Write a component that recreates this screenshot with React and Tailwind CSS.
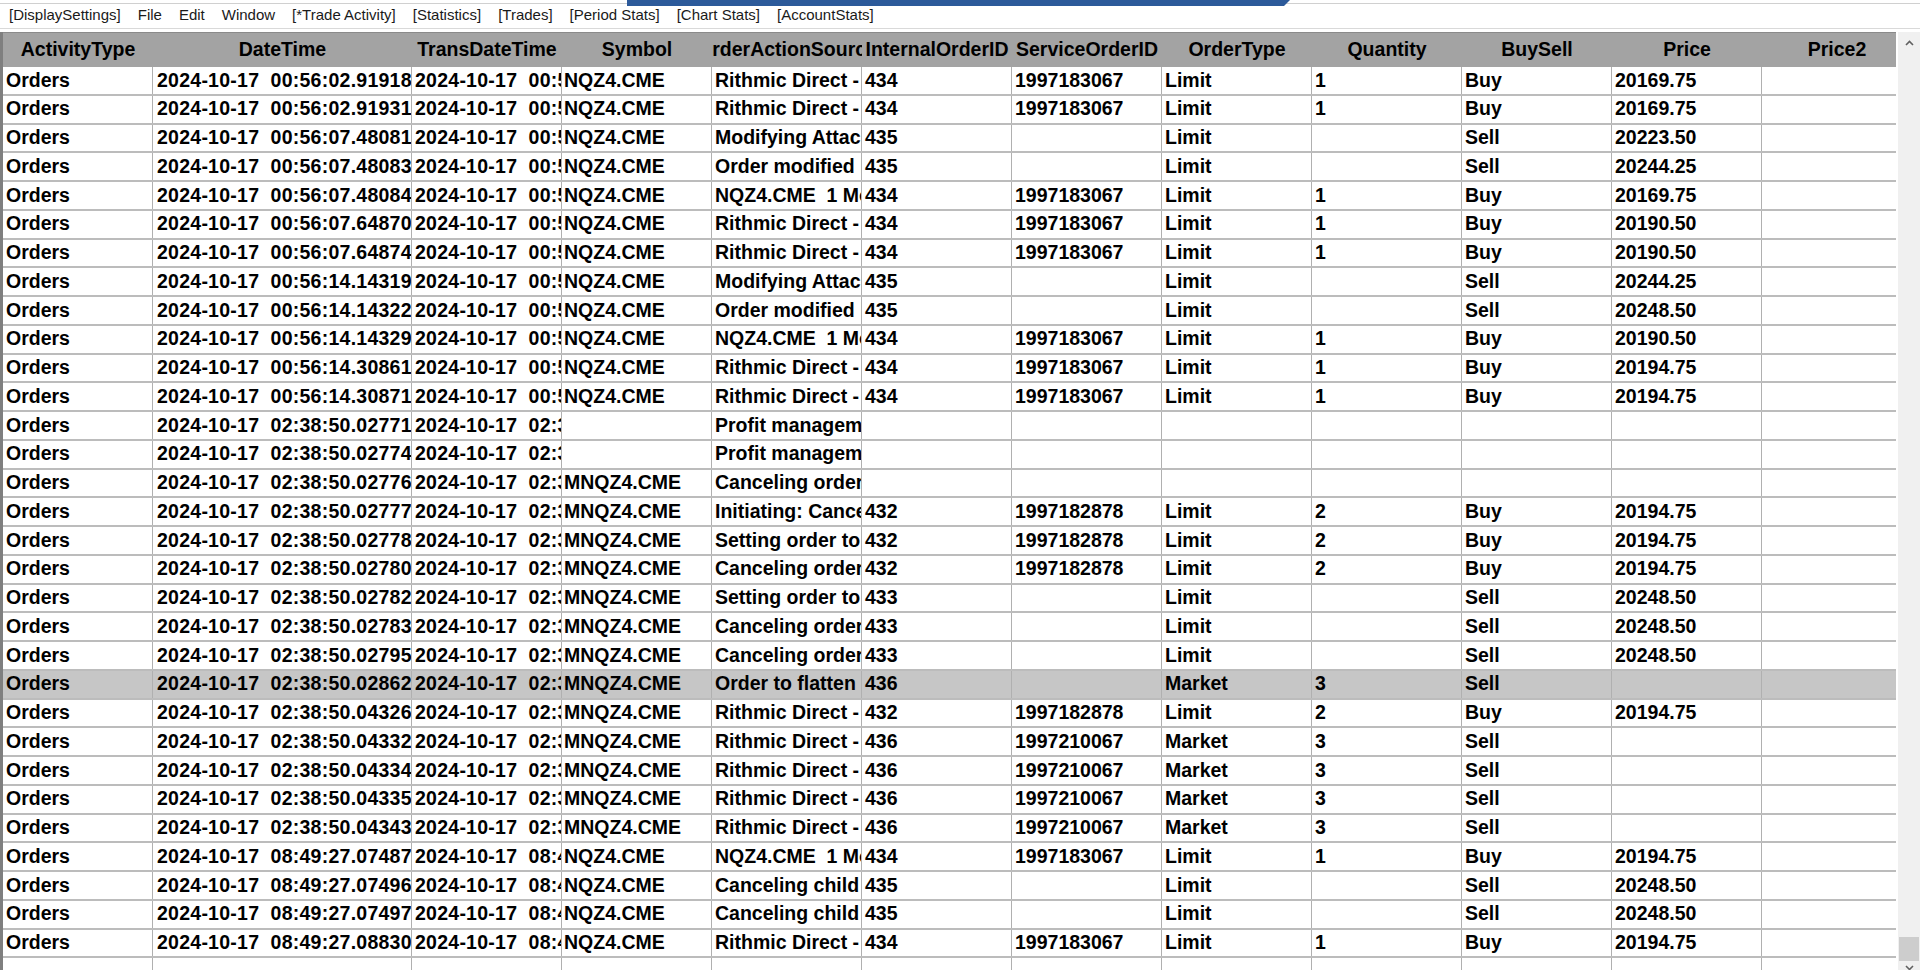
import React from 'react';

const HEAD = ['ActivityType','DateTime','TransDateTime','Symbol','OrderActionSource','InternalOrderID','ServiceOrderID','OrderType','Quantity','BuySell','Price','Price2'];

const MENU = ['[DisplaySettings]','File','Edit','Window','[*Trade Activity]','[Statistics]','[Trades]','[Period Stats]','[Chart Stats]','[AccountStats]'];

const RD = 'Rithmic Direct - Order status update';
const r = (dt, sym, src, iid, sid, type, qty, bs, price) => [
  'Orders', '2024-10-17  ' + dt, '2024-10-17  ' + dt, sym, src, iid, sid, type, qty, bs, price, ''
];

const ROWS = [
  r('00:56:02.91918','NQZ4.CME',RD,'434','1997183067','Limit','1','Buy','20169.75'),
  r('00:56:02.91931','NQZ4.CME',RD,'434','1997183067','Limit','1','Buy','20169.75'),
  r('00:56:07.48081','NQZ4.CME','Modifying Attached Order','435','','Limit','','Sell','20223.50'),
  r('00:56:07.48083','NQZ4.CME','Order modified by user','435','','Limit','','Sell','20244.25'),
  r('00:56:07.48084','NQZ4.CME','NQZ4.CME  1 Modify','434','1997183067','Limit','1','Buy','20169.75'),
  r('00:56:07.64870','NQZ4.CME',RD,'434','1997183067','Limit','1','Buy','20190.50'),
  r('00:56:07.64874','NQZ4.CME',RD,'434','1997183067','Limit','1','Buy','20190.50'),
  r('00:56:14.14319','NQZ4.CME','Modifying Attached Order','435','','Limit','','Sell','20244.25'),
  r('00:56:14.14322','NQZ4.CME','Order modified by user','435','','Limit','','Sell','20248.50'),
  r('00:56:14.14329','NQZ4.CME','NQZ4.CME  1 Modify','434','1997183067','Limit','1','Buy','20190.50'),
  r('00:56:14.30861','NQZ4.CME',RD,'434','1997183067','Limit','1','Buy','20194.75'),
  r('00:56:14.30871','NQZ4.CME',RD,'434','1997183067','Limit','1','Buy','20194.75'),
  r('02:38:50.02771','','Profit management','','','','','',''),
  r('02:38:50.02774','','Profit management','','','','','',''),
  r('02:38:50.02776','MNQZ4.CME','Canceling orders','','','','','',''),
  r('02:38:50.02777','MNQZ4.CME','Initiating: Cancel','432','1997182878','Limit','2','Buy','20194.75'),
  r('02:38:50.02778','MNQZ4.CME','Setting order to cancel','432','1997182878','Limit','2','Buy','20194.75'),
  r('02:38:50.02780','MNQZ4.CME','Canceling order','432','1997182878','Limit','2','Buy','20194.75'),
  r('02:38:50.02782','MNQZ4.CME','Setting order to cancel','433','','Limit','','Sell','20248.50'),
  r('02:38:50.02783','MNQZ4.CME','Canceling order','433','','Limit','','Sell','20248.50'),
  r('02:38:50.02795','MNQZ4.CME','Canceling order','433','','Limit','','Sell','20248.50'),
  r('02:38:50.02862','MNQZ4.CME','Order to flatten position','436','','Market','3','Sell',''),
  r('02:38:50.04326','MNQZ4.CME',RD,'432','1997182878','Limit','2','Buy','20194.75'),
  r('02:38:50.04332','MNQZ4.CME',RD,'436','1997210067','Market','3','Sell',''),
  r('02:38:50.04334','MNQZ4.CME',RD,'436','1997210067','Market','3','Sell',''),
  r('02:38:50.04335','MNQZ4.CME',RD,'436','1997210067','Market','3','Sell',''),
  r('02:38:50.04343','MNQZ4.CME',RD,'436','1997210067','Market','3','Sell',''),
  r('08:49:27.07487','NQZ4.CME','NQZ4.CME  1 Modify','434','1997183067','Limit','1','Buy','20194.75'),
  r('08:49:27.07496','NQZ4.CME','Canceling child order','435','','Limit','','Sell','20248.50'),
  r('08:49:27.07497','NQZ4.CME','Canceling child order','435','','Limit','','Sell','20248.50'),
  r('08:49:27.08830','NQZ4.CME',RD,'434','1997183067','Limit','1','Buy','20194.75'),
  ['','','','','','','','','','','',''],
];

const SELECTED = 21;

function Chevron({ down }) {
  return (
    <svg width="9" height="6" viewBox="0 0 9 6" className="block">
      <polyline
        points={down ? '1,1 4.5,4.5 8,1' : '1,5 4.5,1.5 8,5'}
        fill="none"
        stroke="#606060"
        strokeWidth="1.6"
      />
    </svg>
  );
}

function cellClass(ci) {
  if (ci === 1) return 'w-[259px] pl-[4px] tracking-[0.25px]';
  if (ci === 2) return 'w-[150px] pl-[3px] tracking-[0.25px]';
  if (ci === 3) return 'w-[150px] pl-[2px]';
  return 'w-[150px] pl-[3px]';
}

export default function App() {
  return (
    <div className="w-[1920px] h-[970px] overflow-hidden bg-white flex flex-col font-['Liberation_Sans',Arial,sans-serif] text-black">
      {/* top strip with blue tab */}
      <div className="h-[6px] relative shrink-0">
        <div className="mt-[3px] h-px bg-[#d0d0d0]" />
        <div className="absolute left-[627px] top-0 w-[663px] h-[6px] bg-[#2c5a9a] [clip-path:polygon(0_0,100%_0,calc(100%_-_6px)_100%,0_100%)]" />
      </div>
      {/* menu */}
      <div className="h-[22px] shrink-0 flex items-center gap-[17px] pl-[9px] pb-[3px] text-[15px] text-[#1a1a1a] whitespace-pre">
        {MENU.map((m) => (
          <span key={m}>{m}</span>
        ))}
      </div>
      <div className="h-px shrink-0 bg-[#d9d9d9]" />
      <div className="h-[3px] shrink-0" />
      {/* grid */}
      <div className="flex flex-1 min-h-0">
        <div className="w-[3px] shrink-0 bg-[#7f7f7f]" />
        <div className="w-[1893px] shrink-0 overflow-hidden border-t border-[#8a8a8a] flex flex-col text-[19.5px] font-bold">
          <div className="h-[34px] shrink-0 flex bg-[#a3a3a3]">
            {HEAD.map((h, i) => (
              <div
                key={h}
                className={`${i === 1 ? 'w-[259px]' : 'w-[150px]'} shrink-0 overflow-hidden flex justify-center items-center whitespace-pre`}
              >
                <span className="shrink-0">{h}</span>
              </div>
            ))}
          </div>
          {ROWS.map((row, ri) => (
            <div
              key={ri}
              className={`h-[28.75px] shrink-0 flex border-b-2 border-[#bcbcbc] ${ri === SELECTED ? 'bg-[#c6c6c6]' : 'bg-white'}`}
            >
              {row.map((c, ci) => (
                <div
                  key={ci}
                  className={`${cellClass(ci)} shrink-0 overflow-hidden whitespace-pre flex items-center border-r border-[#b0b0b0] leading-none`}
                >
                  {c}
                </div>
              ))}
            </div>
          ))}
        </div>
        {/* scrollbar */}
        <div className="w-[24px] shrink-0 border-l-2 border-white bg-[#f0f0f0] flex flex-col">
          <div className="h-[22px] shrink-0 flex items-center justify-center">
            <Chevron />
          </div>
          <div className="h-[883px] shrink-0" />
          <div className="h-[24px] shrink-0 mx-[1px] bg-[#cdcdcd]" />
          <div className="h-[20px] shrink-0 flex justify-center pt-[4px]">
            <Chevron down />
          </div>
        </div>
      </div>
    </div>
  );
}
